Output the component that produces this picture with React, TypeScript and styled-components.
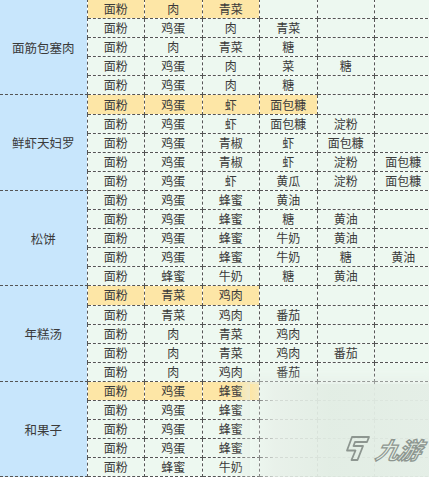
import React from 'react';
import styled, {createGlobalStyle} from "styled-components";

const GlobalStyle = createGlobalStyle`
    html, body {
        margin: 0;
        padding: 0;
        overflow: hidden;
        background: #ffffff;
    }
    body {
        font-family: "Noto Sans CJK SC", "Noto Sans", sans-serif;
    }
`

type Row = { items: string[], hl?: number }
type Group = { name: string, rows: Row[] }

const groups: Group[] = [
    {
        name: '面筋包塞肉', rows: [
            {items: ['面粉', '肉', '青菜'], hl: 3},
            {items: ['面粉', '鸡蛋', '肉', '青菜']},
            {items: ['面粉', '肉', '青菜', '糖']},
            {items: ['面粉', '鸡蛋', '肉', '菜', '糖']},
            {items: ['面粉', '鸡蛋', '肉', '糖']},
        ]
    },
    {
        name: '鲜虾天妇罗', rows: [
            {items: ['面粉', '鸡蛋', '虾', '面包糠'], hl: 4},
            {items: ['面粉', '鸡蛋', '虾', '面包糠', '淀粉']},
            {items: ['面粉', '鸡蛋', '青椒', '虾', '面包糠']},
            {items: ['面粉', '鸡蛋', '青椒', '虾', '淀粉', '面包糠']},
            {items: ['面粉', '鸡蛋', '虾', '黄瓜', '淀粉', '面包糠']},
        ]
    },
    {
        name: '松饼', rows: [
            {items: ['面粉', '鸡蛋', '蜂蜜', '黄油']},
            {items: ['面粉', '鸡蛋', '蜂蜜', '糖', '黄油']},
            {items: ['面粉', '鸡蛋', '蜂蜜', '牛奶', '黄油']},
            {items: ['面粉', '鸡蛋', '蜂蜜', '牛奶', '糖', '黄油']},
            {items: ['面粉', '蜂蜜', '牛奶', '糖', '黄油']},
        ]
    },
    {
        name: '年糕汤', rows: [
            {items: ['面粉', '青菜', '鸡肉'], hl: 3},
            {items: ['面粉', '青菜', '鸡肉', '番茄']},
            {items: ['面粉', '肉', '青菜', '鸡肉']},
            {items: ['面粉', '肉', '青菜', '鸡肉', '番茄']},
            {items: ['面粉', '肉', '鸡肉', '番茄']},
        ]
    },
    {
        name: '和果子', rows: [
            {items: ['面粉', '鸡蛋', '蜂蜜'], hl: 3},
            {items: ['面粉', '鸡蛋', '蜂蜜']},
            {items: ['面粉', '鸡蛋', '蜂蜜']},
            {items: ['面粉', '鸡蛋', '蜂蜜']},
            {items: ['面粉', '蜂蜜', '牛奶']},
        ]
    },
]

const COLS = 6

export default function App() {
    return (
        <Page>
            <GlobalStyle/>
            <RecipeTable>
                <colgroup>
                    <NameCol/>
                    {Array.from({length: COLS}).map((_, i) => <ItemCol key={i}/>)}
                </colgroup>
                <tbody>
                {groups.map(g => g.rows.map((r, ri) => (
                    <tr key={g.name + ri}>
                        {ri === 0 && <NameCell rowSpan={g.rows.length}>{g.name}</NameCell>}
                        {Array.from({length: COLS}).map((_, ci) => (
                            <Cell key={ci} $hl={!!r.hl && ci < r.hl}>{r.items[ci] || ''}</Cell>
                        ))}
                    </tr>
                )))}
                </tbody>
            </RecipeTable>
            <Watermark>
                <Logo>
                    <svg width="28" height="27" viewBox="0 0 28 27">
                        <path d="M9 2 L26 2 L24 7 L12 7 L10.5 11 L20 11 L14.5 25 L8.5 25 L12.5 15.5 L4 15.5 Z"
                              fill="none" stroke="#8d9690" strokeWidth="1.8" strokeLinejoin="round"/>
                    </svg>
                    <LogoText>九游</LogoText>
                </Logo>
            </Watermark>
        </Page>
    );
};

const Page = styled.div`
    position: relative;
    width: 429px;
    height: 477px;
    overflow: hidden;
`

const RecipeTable = styled.table`
    border-collapse: collapse;
    table-layout: fixed;
    width: 432px;
    margin-top: -1px;
    font-size: 12px;
    color: #3a3a3a;
`

const NameCol = styled.col`
    width: 87px;
`

const ItemCol = styled.col`
    width: 57.5px;
`

const NameCell = styled.td`
    background: #c8e6fc;
    border: 1px dashed #555;
    border-left: none;
    text-align: center;
    padding: 0;
    font-size: 12.5px;
`

const Cell = styled.td<{ $hl: boolean }>`
    background: ${p => p.$hl ? '#fde6a6' : '#edf8f0'};
    border: 1px dashed #555;
    height: 18.1px;
    padding: 0;
    text-align: center;
    line-height: 18px;
    white-space: nowrap;
    overflow: hidden;
`

const Watermark = styled.div`
    position: absolute;
    left: 250px;
    top: 384px;
    right: 0;
    bottom: 0;
    display: flex;
    align-items: flex-end;
    justify-content: flex-end;
    padding: 0 8px 15px 0;
    background: linear-gradient(90deg, rgba(237, 244, 238, 0) 0%, rgba(232, 240, 233, 0.85) 14%, rgba(226, 237, 228, 0.95) 45%, rgba(228, 238, 230, 0.95) 100%);
    box-shadow: 0 0 10px 6px rgba(230, 239, 232, 0.6);
`

const Logo = styled.div`
    display: flex;
    align-items: center;
    gap: 6px;
`

const LogoText = styled.span`
    font-size: 23px;
    line-height: 26px;
    font-style: italic;
    font-weight: bold;
    color: transparent;
    -webkit-text-stroke: 1.3px #8d9690;
    transform: skewX(-14deg);
    letter-spacing: -1px;
`
